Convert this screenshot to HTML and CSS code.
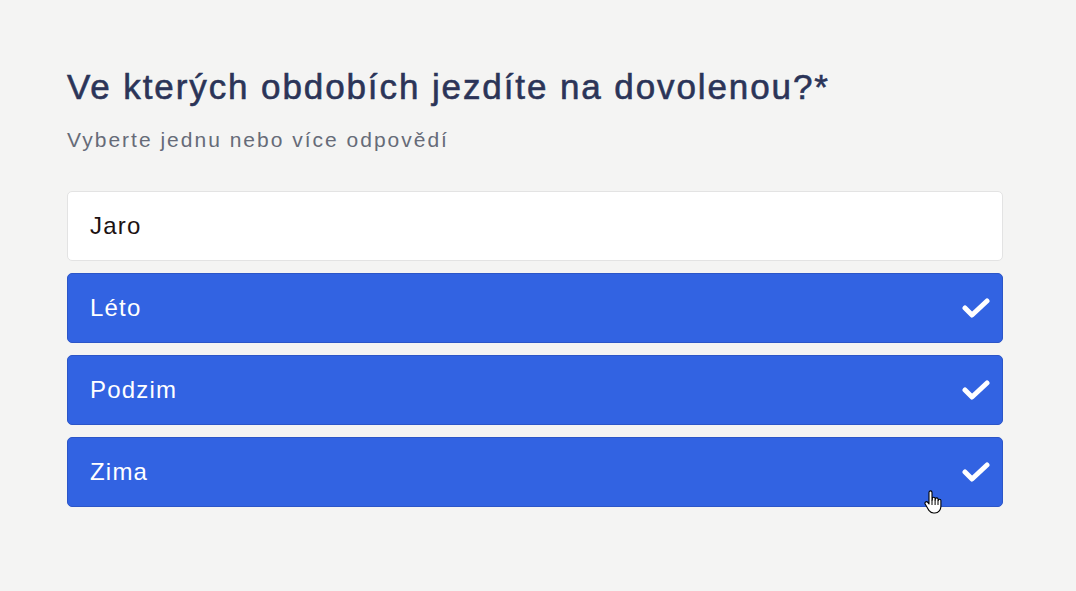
FILE: index.html
```html
<!DOCTYPE html>
<html lang="cs">
<head>
<meta charset="utf-8">
<link rel="stylesheet" href="styles.css">
</head>
<body>
<main class="question">
  <h1 class="title">Ve kterých obdobích jezdíte na dovolenou?*</h1>
  <p class="hint">Vyberte jednu nebo více odpovědí</p>
  <div class="options">
    <div class="option">Jaro</div>
    <div class="option selected">Léto
      <svg class="check" viewBox="0 0 28 22" width="28" height="22"><path d="M3 11 L10 18 L25 4" fill="none" stroke="#fff" stroke-width="5" stroke-linecap="round" stroke-linejoin="round"/></svg>
    </div>
    <div class="option selected">Podzim
      <svg class="check" viewBox="0 0 28 22" width="28" height="22"><path d="M3 11 L10 18 L25 4" fill="none" stroke="#fff" stroke-width="5" stroke-linecap="round" stroke-linejoin="round"/></svg>
    </div>
    <div class="option selected last">Zima
      <svg class="check" viewBox="0 0 28 22" width="28" height="22"><path d="M3 11 L10 18 L25 4" fill="none" stroke="#fff" stroke-width="5" stroke-linecap="round" stroke-linejoin="round"/></svg>
      <svg class="cursor" viewBox="0 0 18 24" width="18" height="24"><path d="M5 2.5c0-1 .7-1.6 1.5-1.6S8 1.5 8 2.5V10h.3V8.6c0-.9.7-1.4 1.4-1.4s1.4.5 1.4 1.4V10h.2V9.3c0-.9.7-1.4 1.4-1.4s1.4.5 1.4 1.4v1.2h.2c0-.8.6-1.2 1.3-1.2s1.3.5 1.3 1.3v5.6c0 3.5-2.3 6.8-6 6.8H9.5c-2 0-3.4-1-4.6-2.6L1.3 14.3c-.6-.8-.4-1.8.3-2.3s1.6-.3 2.2.4L5 14Z" fill="#fff" stroke="#000" stroke-width="1.1" stroke-linejoin="round"/><path d="M8 10v5M11.1 10v5M14 10.5v4.5" stroke="#000" stroke-width="1"/></svg>
    </div>
  </div>
</main>
</body>
</html>
```
FILE: styles.css
```css
html, body {
  margin: 0;
  padding: 0;
}
body {
  background: #f4f4f3;
  font-family: "Liberation Sans", Arial, sans-serif;
  width: 1076px;
  height: 591px;
  overflow: hidden;
}
.question {
  padding: 65px 73px 0 67px;
}
.title {
  margin: 0;
  font-size: 35px;
  font-weight: normal;
  -webkit-text-stroke: 0.6px #2b3458;
  color: #2b3458;
  line-height: 44px;
  letter-spacing: 1.9px;
}
.hint {
  margin: 19px 0 0;
  font-size: 21px;
  line-height: 24px;
  color: #666b78;
  letter-spacing: 2px;
}
.options {
  margin-top: 39px;
  display: flex;
  flex-direction: column;
  gap: 12px;
}
.option {
  position: relative;
  height: 70px;
  box-sizing: border-box;
  border: 1px solid #e3e3e3;
  border-radius: 5px;
  background: #fff;
  color: #1d1212;
  font-size: 24px;
  letter-spacing: 1.2px;
  padding: 0 22px;
  display: flex;
  align-items: center;
  justify-content: space-between;
}
.option.selected {
  background: #3263e2;
  border-color: #2c56c8;
  color: #fff;
}
.check {
  margin-right: -10px;
}
.cursor {
  position: absolute;
  left: 856px;
  top: 52px;
}
```
